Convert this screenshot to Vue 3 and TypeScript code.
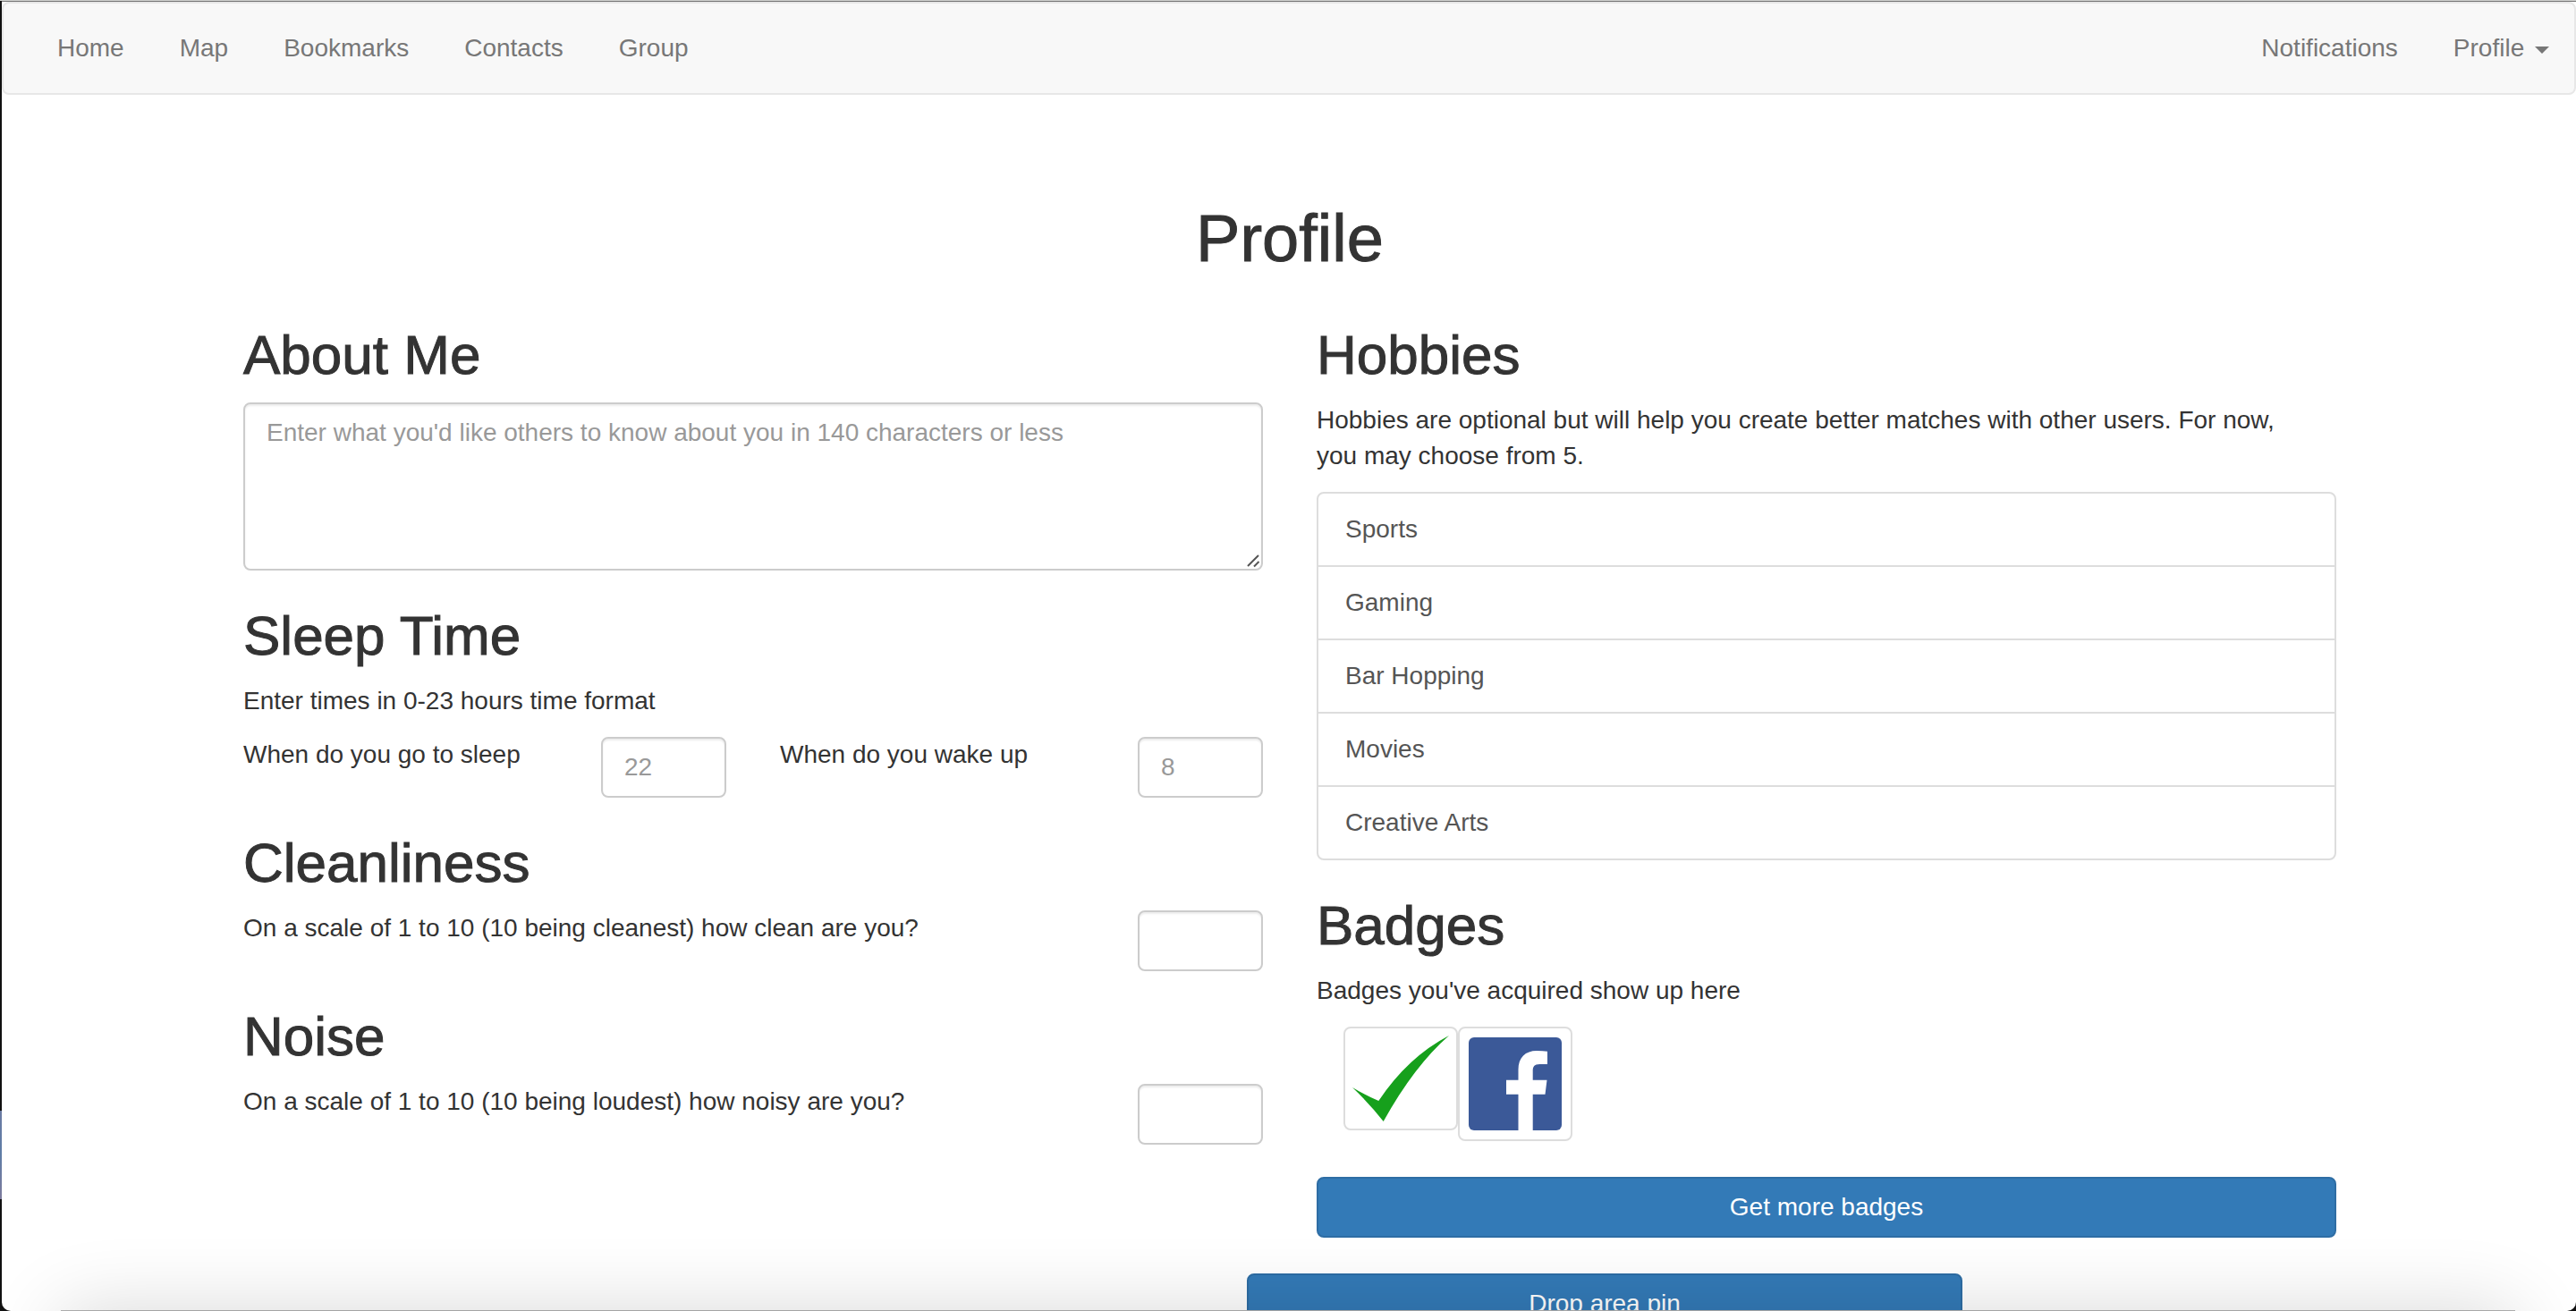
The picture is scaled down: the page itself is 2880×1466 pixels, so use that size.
<script setup lang="ts">
import { ref } from 'vue'

const navLinks: string[] = ['Home', 'Map', 'Bookmarks', 'Contacts', 'Group']
const hobbies: string[] = ['Sports', 'Gaming', 'Bar Hopping', 'Movies', 'Creative Arts']

const about = ref('')
const sleepTime = ref('')
const wakeTime = ref('')
const cleanliness = ref('')
const noise = ref('')
</script>

<template>
  <div class="desktop">
    <div class="window">
      <nav class="navbar">
        <ul class="nav">
          <li v-for="link in navLinks" :key="link"><a href="#">{{ link }}</a></li>
        </ul>
        <ul class="nav">
          <li><a href="#">Notifications</a></li>
          <li><a href="#">Profile <span class="caret"></span></a></li>
        </ul>
      </nav>

      <main class="page">
        <h1>Profile</h1>

        <div class="columns">
          <section class="column">
            <h2><label for="about">About Me</label></h2>
            <div class="about">
              <textarea
                id="about"
                v-model="about"
                class="control"
                rows="4"
                maxlength="140"
                placeholder="Enter what you'd like others to know about you in 140 characters or less"
              ></textarea>
              <svg class="grip" viewBox="0 0 16 16" aria-hidden="true">
                <path d="M2 14 14 2M9 14.500 14.500 9" />
              </svg>
            </div>

            <h2>Sleep Time</h2>
            <p>Enter times in 0-23 hours time format</p>
            <div class="fields">
              <label for="sleep">When do you go to sleep</label>
              <input id="sleep" v-model="sleepTime" class="control" type="text" placeholder="22" />
              <label for="wake">When do you wake up</label>
              <input id="wake" v-model="wakeTime" class="control" type="text" placeholder="8" />
            </div>

            <h2>Cleanliness</h2>
            <div class="fields">
              <label class="wide" for="clean">On a scale of 1 to 10 (10 being cleanest) how clean are you?</label>
              <input id="clean" v-model="cleanliness" class="control" type="text" />
            </div>

            <h2>Noise</h2>
            <div class="fields">
              <label class="wide" for="noise">On a scale of 1 to 10 (10 being loudest) how noisy are you?</label>
              <input id="noise" v-model="noise" class="control" type="text" />
            </div>
          </section>

          <section class="column">
            <h2>Hobbies</h2>
            <p>
              Hobbies are optional but will help you create better matches with other users. For now,
              you may choose from 5.
            </p>
            <div class="list-group">
              <a v-for="hobby in hobbies" :key="hobby" href="#">{{ hobby }}</a>
            </div>

            <h2>Badges</h2>
            <p>Badges you've acquired show up here</p>
            <div class="badges">
              <span class="thumbnail">
                <svg width="108" height="96" viewBox="0 0 108 96" role="img" aria-label="Verified">
                  <path
                    fill="#16a01c"
                    d="M0 58Q15 67 29.300 73Q62 24 108 0Q69 34 34.700 96Q20 77 0 58Z"
                  />
                </svg>
              </span>
              <span class="thumbnail">
                <svg width="108" height="108" viewBox="0 0 108 108" role="img" aria-label="Facebook">
                  <rect x="2" y="2" width="104" height="104" rx="6" fill="#3b5998" />
                  <path
                    fill="#fff"
                    d="M57.500 106V65.700H44V49.700H57.500V38C57.500 24.500 65.500 17 78 17Q85 17 90 17.700V32H81.500C75 32 73.700 35 73.700 39.500V49.700H89.500L87.500 65.700H73.700V106Z"
                  />
                </svg>
              </span>
            </div>
            <button class="btn" type="button">Get more badges</button>
          </section>
        </div>

        <button class="btn drop-pin" type="button">Drop area pin</button>
      </main>

      <div class="bottom-shadow"></div>
    </div>
  </div>
</template>

<style>
body {
  margin: 0;
  overflow: hidden;
}
</style>

<style scoped>
* {
  box-sizing: border-box;
}

.desktop {
  height: 100vh;
  border-top: 1px solid #d0d1cf;
  padding-left: 2px;
  background: linear-gradient(#111 84.7%, #6b7ba3 84.7%, #5f7da6 88%, #7d7a9c 91.5%, #111 91.5%);
  color: #333;
  font-family: "Liberation Sans", Arial, sans-serif;
  font-size: 28px;
  line-height: 40px;
}

.window {
  position: relative;
  height: 100%;
  overflow: hidden;
  border-top: 1px solid #777;
  border-radius: 0 0 10px 10px;
  background: #fff;
}

.navbar {
  display: flex;
  justify-content: space-between;
  padding: 0 0 0 30px;
  border: 2px solid #e7e7e7;
  border-radius: 8px;
  background: #f8f8f8;
}

.nav {
  display: flex;
  gap: 2px;
  margin: 0;
  padding: 0;
  list-style: none;
}

.nav:last-child {
  margin-right: -2px;
}

.nav a {
  display: block;
  padding: 30px;
  color: #777;
  text-decoration: none;
}

.caret {
  display: inline-block;
  margin-left: 4px;
  border-top: 8px solid;
  border-right: 8px solid transparent;
  border-left: 8px solid transparent;
  vertical-align: middle;
}

.page {
  max-width: 2402px;
  margin: 0 auto;
  padding: 122px 0 0 2px;
}

h1,
h2 {
  margin: 0;
  font-weight: 400;
  -webkit-text-stroke: 1px #333;
}

h1 {
  margin-bottom: 18px;
  font-size: 74px;
  line-height: 78px;
  text-align: center;
}

h2 {
  margin: 40px 0 20px;
  font-size: 62px;
  line-height: 66px;
}

p {
  margin: 0 0 20px;
  padding-right: 30px;
}

.columns {
  display: grid;
  grid-template-columns: 1fr 1fr;
  gap: 60px;
  padding: 0 30px;
}

.control {
  display: block;
  width: 100%;
  margin: 0;
  padding: 12px 24px;
  border: 2px solid #ccc;
  border-radius: 8px;
  background: #fff;
  box-shadow: inset 0 2px 2px rgba(0, 0, 0, 0.075);
  color: #555;
  font: inherit;
}

.control::placeholder {
  color: #999;
  opacity: 1;
}

input.control {
  height: 68px;
}

.about {
  position: relative;
}

textarea.control {
  resize: none;
}

.grip {
  position: absolute;
  right: 3px;
  bottom: 3px;
  width: 16px;
  height: 16px;
  fill: none;
  stroke: #555;
  stroke-width: 2;
  pointer-events: none;
}

.fields {
  display: grid;
  grid-template-columns: 1fr 140px 1fr 140px;
  column-gap: 60px;
}

.wide {
  grid-column: span 3;
}

.list-group {
  border: 2px solid #ddd;
  border-radius: 8px;
}

.list-group a {
  display: block;
  padding: 20px 30px;
  color: #555;
  text-decoration: none;
}

.list-group a + a {
  border-top: 2px solid #ddd;
}

.badges {
  display: flex;
  align-items: flex-start;
  margin-bottom: 40px;
  padding-left: 30px;
}

.thumbnail {
  padding: 8px;
  border: 2px solid #ddd;
  border-radius: 8px;
}

.thumbnail svg {
  display: block;
}

.btn {
  display: block;
  width: 100%;
  margin: 0;
  padding: 12px 24px;
  border: 2px solid #2e6da4;
  border-radius: 8px;
  background: #337ab7;
  color: #fff;
  font: inherit;
}

.drop-pin {
  width: 800px;
  margin: 40px 0 40px 48%;
}

.bottom-shadow {
  position: absolute;
  right: 68px;
  bottom: 0;
  left: 66px;
  height: 1px;
  background: #b4b4b4;
}

.bottom-shadow::after {
  content: "";
  position: absolute;
  top: 1px;
  right: 0;
  left: 0;
  height: 200px;
  box-shadow: 0 0 86px rgba(0, 0, 0, 0.16);
}
</style>
